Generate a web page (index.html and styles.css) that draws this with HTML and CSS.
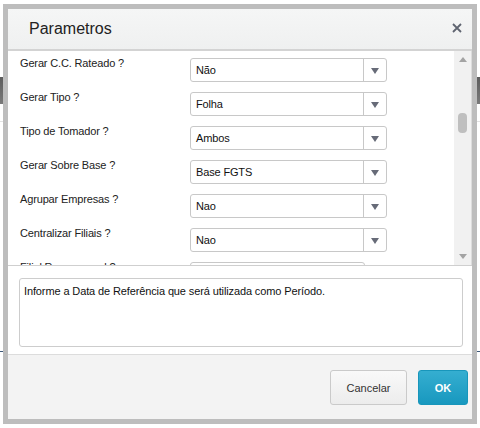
FILE: index.html
```html
<!DOCTYPE html>
<html lang="pt-BR">
<head>
  <meta charset="UTF-8" />
  <title>Parametros</title>
  <link rel="stylesheet" href="styles.css">
</head>
<body>
  <!-- page behind the modal -->
  <div class="backdrop">
    <div class="toolbar"></div>
    <div class="thin-rule"></div>
    <div class="page-rule"></div>
  </div>

  <div class="dialog">
    <div class="dialog-head">
      <h1>Parametros</h1>
      <svg class="close" width="10" height="10" viewBox="0 0 10 10">
        <path d="M1 1 L9 9 M9 1 L1 9" stroke="#5f6470" stroke-width="1.8" fill="none"/>
      </svg>
    </div>

    <div class="params">
      <div class="param-list">
        <div class="param-row">
          <label>Gerar C.C. Rateado ?</label>
          <div class="combo"><span class="combo-value">Não</span><span class="combo-btn"><i></i></span></div>
        </div>
        <div class="param-row">
          <label>Gerar Tipo ?</label>
          <div class="combo"><span class="combo-value">Folha</span><span class="combo-btn"><i></i></span></div>
        </div>
        <div class="param-row">
          <label>Tipo de Tomador ?</label>
          <div class="combo"><span class="combo-value">Ambos</span><span class="combo-btn"><i></i></span></div>
        </div>
        <div class="param-row">
          <label>Gerar Sobre Base ?</label>
          <div class="combo"><span class="combo-value">Base FGTS</span><span class="combo-btn"><i></i></span></div>
        </div>
        <div class="param-row">
          <label>Agrupar Empresas ?</label>
          <div class="combo"><span class="combo-value">Nao</span><span class="combo-btn"><i></i></span></div>
        </div>
        <div class="param-row">
          <label>Centralizar Filiais ?</label>
          <div class="combo"><span class="combo-value">Nao</span><span class="combo-btn"><i></i></span></div>
        </div>
        <div class="param-row">
          <label>Filial Responsavel ?</label>
          <div class="combo short"><span class="combo-value"></span></div>
        </div>
      </div>
      <div class="scrollbar">
        <div class="sb-btn"><i class="up"></i></div>
        <div class="sb-track"><div class="sb-thumb"></div></div>
        <div class="sb-btn"><i class="down"></i></div>
      </div>
    </div>

    <div class="help">
      <div class="help-box">Informe a Data de Referência que será utilizada como Período.</div>
    </div>

    <div class="dialog-foot">
      <button class="btn">Cancelar</button>
      <button class="btn btn-ok">OK</button>
    </div>
  </div>
</body>
</html>
```

FILE: styles.css
```css
body {
  margin: 0;
  font-family: "Liberation Sans", Arial, sans-serif;
  background: #fff;
  color: #222;
  overflow: hidden;
}
.backdrop {
  height: 428px;
  padding-top: 77px;
  box-sizing: border-box;
}
.toolbar {
  height: 27px;
  background: linear-gradient(to bottom, #5c5c5c, #7a7a7a);
}
.thin-rule {
  margin-top: 17px;
  height: 1px;
  background: #e2e2e2;
}
.page-rule {
  margin-top: 229px;
  height: 1px;
  background: #3d5878;
}

.dialog {
  position: absolute;
  left: 3px;
  top: 4px;
  width: 464px;
  height: 410px;
  border: 5px solid #bdbdbd;
  background: #fff;
  display: flex;
  flex-direction: column;
}
.dialog-head {
  height: 40px;
  background: linear-gradient(to bottom, #f5f6f6, #eff0f0);
  border-bottom: 2px solid #d3d3d3;
  display: flex;
  align-items: center;
  justify-content: space-between;
  padding: 0 10px 0 21px;
}
.dialog-head h1 {
  margin: 0;
  font-size: 16px;
  font-weight: normal;
  color: #222;
  line-height: 40px;
}
.close {
  display: block;
  margin-top: -2px;
}

.params {
  height: 214px;
  border-bottom: 1px solid #cfcfcf;
  display: flex;
}
.param-list {
  flex: 1;
  overflow: hidden;
  padding: 5px 0 0 12px;
}
.param-row {
  height: 34px;
  display: flex;
}
.param-row label {
  width: 170px;
  font-size: 11px;
  line-height: 14px;
  letter-spacing: -0.15px;
  color: #222;
}
.combo {
  margin-top: 2px;
  width: 197px;
  height: 24px;
  box-sizing: border-box;
  border: 1px solid #c8c8c8;
  border-radius: 3px;
  display: flex;
  font-size: 11px;
  letter-spacing: -0.15px;
  color: #111;
}
.combo.short {
  width: 175px;
}
.combo-value {
  flex: 1;
  padding-left: 5px;
  line-height: 23px;
}
.combo-btn {
  width: 22px;
  border-left: 1px solid #c8c8c8;
  display: flex;
  align-items: center;
  justify-content: center;
}
.combo-btn i {
  width: 0;
  height: 0;
  border-left: 4px solid transparent;
  border-right: 4px solid transparent;
  border-top: 6px solid #676b78;
  margin-top: 1px;
}

.scrollbar {
  width: 17px;
  background: #f1f1f1;
  border-right: 1px solid #dcdcdc;
  display: flex;
  flex-direction: column;
}
.sb-btn {
  height: 17px;
  display: flex;
  align-items: center;
  justify-content: center;
}
.sb-btn i {
  width: 0;
  height: 0;
  border-left: 4px solid transparent;
  border-right: 4px solid transparent;
}
.sb-btn .up {
  border-bottom: 5px solid #a3a3a3;
}
.sb-btn .down {
  border-top: 5px solid #a3a3a3;
}
.sb-track {
  flex: 1;
}
.sb-thumb {
  margin: 45px auto 0;
  width: 9px;
  height: 20px;
  border-radius: 4px;
  background: #bfbfbf;
}

.help {
  height: 88px;
  box-sizing: border-box;
  padding: 12px 9px 0 11px;
}
.help-box {
  height: 69px;
  box-sizing: border-box;
  border: 1px solid #cdcdcd;
  border-radius: 3px;
  padding: 5px 4px;
  font-size: 11px;
  line-height: 14px;
  letter-spacing: -0.12px;
  color: #111;
}

.dialog-foot {
  flex: 1;
  background: #f3f3f3;
  border-top: 1px solid #dcdcdc;
  display: flex;
  justify-content: flex-end;
  align-items: flex-start;
  gap: 11px;
  padding: 15px 4px 0 0;
}
.btn {
  height: 35px;
  border-radius: 3px;
  font-family: inherit;
  font-size: 11px;
  cursor: pointer;
}
.btn:first-child {
  width: 77px;
  border: 1px solid #cacaca;
  background: linear-gradient(to bottom, #f9f9f9, #ececec);
  color: #333;
}
.btn-ok {
  width: 50px;
  border: 1px solid #1896bb;
  background: linear-gradient(to bottom, #35aed0, #1898bf);
  color: #fff;
  font-weight: bold;
}
```
